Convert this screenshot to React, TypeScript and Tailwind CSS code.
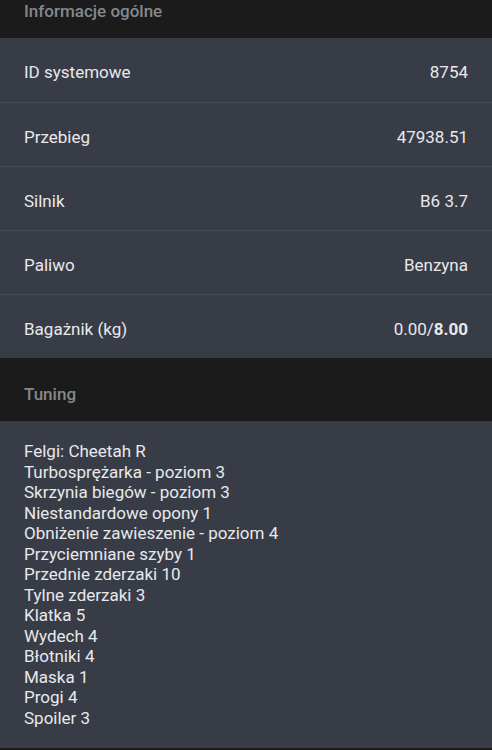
import React from 'react';

const info: { label: string; value: React.ReactNode }[] = [
  { label: 'ID systemowe', value: '8754' },
  { label: 'Przebieg', value: '47938.51' },
  { label: 'Silnik', value: 'B6 3.7' },
  { label: 'Paliwo', value: 'Benzyna' },
  {
    label: 'Bagażnik (kg)',
    value: (
      <>
        0.00/<span className="font-bold">8.00</span>
      </>
    ),
  },
];

const tuning = [
  'Felgi: Cheetah R',
  'Turbosprężarka - poziom 3',
  'Skrzynia biegów - poziom 3',
  'Niestandardowe opony 1',
  'Obniżenie zawieszenie - poziom 4',
  'Przyciemniane szyby 1',
  'Przednie zderzaki 10',
  'Tylne zderzaki 3',
  'Klatka 5',
  'Wydech 4',
  'Błotniki 4',
  'Maska 1',
  'Progi 4',
  'Spoiler 3',
];

const SectionHeader = ({ title, h }: { title: string; h: string }) => (
  <div className={`${h} bg-[#1b1b1b] px-6 pt-[10px] flex items-center text-[17px] font-medium text-[#85888d]`}>
    {title}
  </div>
);

export default function App() {
  return (
    <div className="w-[492px] h-[750px] overflow-hidden bg-[#1b1b1b]" style={{ fontFamily: 'Roboto, "Noto Sans", sans-serif' }}>
      <div className="-mt-[24px]">
        <SectionHeader title="Informacje ogólne" h="h-[62px]" />
        <div className="bg-[#383c47]">
          {info.map((row, i) => (
            <div
              key={row.label}
              className={`h-[64px] px-6 pt-[6px] flex items-center justify-between text-[17px] text-[#e8e9eb] ${i > 0 ? 'border-t border-[#474b56]' : ''}`}
            >
              <span>{row.label}</span>
              <span>{row.value}</span>
            </div>
          ))}
        </div>
        <SectionHeader title="Tuning" h="h-[63px]" />
        <div className="bg-[#383c47] px-6 pt-[20px] pb-[20px] text-[17px] leading-[20.5px] text-[#e8e9eb]">
          {tuning.map((t) => (
            <div key={t}>{t}</div>
          ))}
        </div>
      </div>
    </div>
  );
}
